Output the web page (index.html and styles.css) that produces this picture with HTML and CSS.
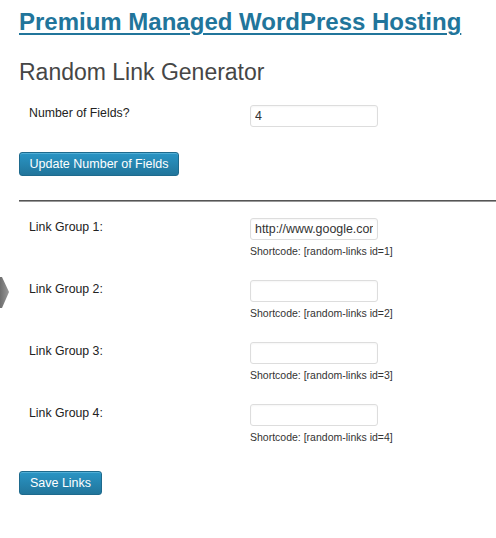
FILE: index.html
```html
<!DOCTYPE html>
<html>
<head>
<meta charset="utf-8">
<link rel="stylesheet" href="styles.css">
</head>
<body>
<div class="side-arrow"><svg width="10" height="34" viewBox="0 0 10 34"><defs><linearGradient id="g" x1="0" y1="0" x2="1" y2="0"><stop offset="0" stop-color="#6e6e6e"/><stop offset="1" stop-color="#9a9a9a"/></linearGradient></defs><polygon points="0,1 2,1 9,16 2,32 0,32" fill="url(#g)"/></svg></div>
<div class="page">
  <h1 class="site-title"><a href="#">Premium Managed WordPress Hosting</a></h1>
  <h2 class="page-title">Random Link Generator</h2>

  <div class="field-row count-row">
    <label class="label">Number of Fields?</label>
    <div class="control"><input class="text-input" type="text" value="4"></div>
  </div>
  <button class="btn btn-update">Update Number of Fields</button>

  <hr class="divider">

  <div class="field-row link-row">
    <label class="label">Link Group 1:</label>
    <div class="control"><input class="text-input" type="text" value="http://www.google.com"><div class="shortcode">Shortcode: [random-links id=1]</div></div>
  </div>
  <div class="field-row link-row">
    <label class="label">Link Group 2:</label>
    <div class="control"><input class="text-input" type="text" value=""><div class="shortcode">Shortcode: [random-links id=2]</div></div>
  </div>
  <div class="field-row link-row">
    <label class="label">Link Group 3:</label>
    <div class="control"><input class="text-input" type="text" value=""><div class="shortcode">Shortcode: [random-links id=3]</div></div>
  </div>
  <div class="field-row link-row">
    <label class="label">Link Group 4:</label>
    <div class="control"><input class="text-input" type="text" value=""><div class="shortcode">Shortcode: [random-links id=4]</div></div>
  </div>

  <button class="btn btn-save">Save Links</button>
</div>
</body>
</html>
```

FILE: styles.css
```css
html, body {
  margin: 0;
  padding: 0;
  background: #fff;
}
body {
  font-family: "Liberation Sans", Arial, sans-serif;
  color: #222;
  position: relative;
}
.side-arrow {
  position: absolute;
  left: 0;
  top: 276px;
  width: 10px;
  height: 34px;
}
.side-arrow svg { display: block; }
.page {
  padding: 0 0 0 19px;
  display: flex;
  flex-direction: column;
  align-items: flex-start;
}
.site-title {
  margin: 7px 0 0;
  font-size: 24px;
  font-weight: bold;
  line-height: 30px;
}
.site-title a {
  color: #21759b;
  text-decoration: underline;
  text-decoration-thickness: 2px;
  text-underline-offset: 3px;
}
.page-title {
  margin: 21px 0 0;
  font-size: 23px;
  font-weight: normal;
  color: #464646;
  line-height: 28px;
}
.field-row {
  display: grid;
  grid-template-columns: 231px 1fr;
  width: 100%;
}
.count-row {
  margin-top: 19px;
  height: 47px;
}
.label {
  padding-left: 10px;
  font-size: 12.3px;
  line-height: 16px;
  color: #222;
  padding-top: 0;
}
.link-row .label { padding-top: 1px; }
.text-input {
  box-sizing: border-box;
  width: 128px;
  height: 22px;
  margin: 0;
  padding: 0 4px;
  border: 1px solid #dddddd;
  border-radius: 3px;
  font-family: "Liberation Sans", Arial, sans-serif;
  font-size: 12.4px;
  color: #333;
  background: #fff;
  box-shadow: inset 0 1px 2px rgba(0,0,0,0.04);
  outline: none;
}
.btn {
  box-sizing: border-box;
  height: 24px;
  padding: 0;
  border: 1px solid #1e6a8d;
  border-radius: 3px;
  background: linear-gradient(#2a95c5, #21759b);
  color: #fff;
  font-family: "Liberation Sans", Arial, sans-serif;
  font-size: 12.5px;
  line-height: 22px;
  white-space: nowrap;
  text-align: center;
  box-shadow: inset 0 1px 0 rgba(120,200,230,0.5);
  cursor: pointer;
}
.btn-update { width: 160px; }
.btn-save { width: 83px; margin-top: 5px; }
.divider {
  align-self: stretch;
  margin: 24px 0 16px;
  border: 0;
  height: 0;
  border-top: 1px solid #555;
  border-bottom: 1px solid #999;
}
.link-row { height: 62px; }
.shortcode {
  margin-top: 5px;
  font-size: 10.5px;
  line-height: 13px;
  color: #333;
}
```
